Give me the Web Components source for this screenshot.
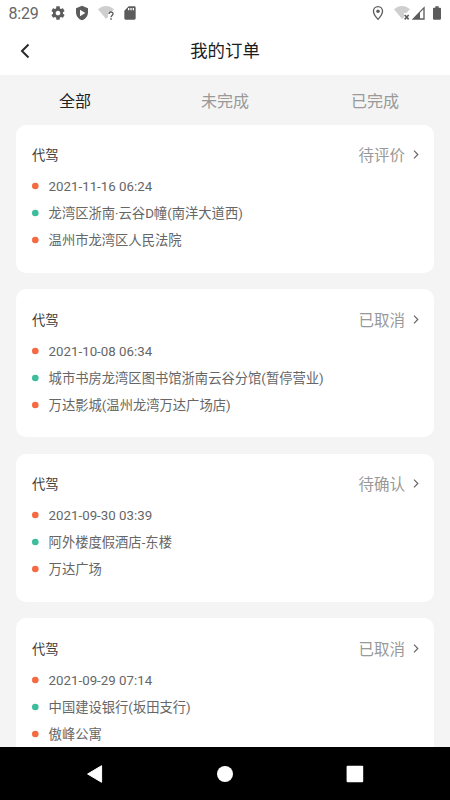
<!DOCTYPE html>
<html lang="zh-CN">
<head>
<meta charset="UTF-8">
<title>我的订单</title>
<style>
  body {
    margin: 0;
    width: 450px;
    height: 800px;
    overflow: hidden;
    background: #f4f4f4;
    font-family: Roboto, "Noto Sans CJK SC", sans-serif;
  }
</style>
</head>
<body>
<order-app>
  <status-bar slot="top" time="8:29"></status-bar>
  <nav-header slot="top">我的订单</nav-header>
  <tab-bar slot="top">
    <tab-item active>全部</tab-item>
    <tab-item>未完成</tab-item>
    <tab-item>已完成</tab-item>
  </tab-bar>
  <order-card status="待评价">
    代驾
    <order-line slot="lines">2021-11-16 06:24</order-line>
    <order-line slot="lines" kind="start">龙湾区浙南·云谷D幢(南洋大道西)</order-line>
    <order-line slot="lines">温州市龙湾区人民法院</order-line>
  </order-card>
  <order-card status="已取消">
    代驾
    <order-line slot="lines">2021-10-08 06:34</order-line>
    <order-line slot="lines" kind="start">城市书房龙湾区图书馆浙南云谷分馆(暂停营业)</order-line>
    <order-line slot="lines">万达影城(温州龙湾万达广场店)</order-line>
  </order-card>
  <order-card status="待确认">
    代驾
    <order-line slot="lines">2021-09-30 03:39</order-line>
    <order-line slot="lines" kind="start">阿外楼度假酒店-东楼</order-line>
    <order-line slot="lines">万达广场</order-line>
  </order-card>
  <order-card status="已取消">
    代驾
    <order-line slot="lines">2021-09-29 07:14</order-line>
    <order-line slot="lines" kind="start">中国建设银行(坂田支行)</order-line>
    <order-line slot="lines">傲峰公寓</order-line>
  </order-card>
  <system-nav slot="bottom"></system-nav>
</order-app>

<script>
class OrderApp extends HTMLElement {
  constructor() {
    super();
    this.attachShadow({ mode: 'open' }).innerHTML = `
      <style>
        :host {
          display: flex;
          flex-direction: column;
          height: 800px;
        }
        main {
          flex: 1;
          min-height: 0;
          overflow: hidden;
          display: flex;
          flex-direction: column;
          gap: 16.5px;
          padding: 0 16px;
        }
      </style>
      <slot name="top"></slot>
      <main><slot></slot></main>
      <slot name="bottom"></slot>
    `;
  }
}

class StatusBar extends HTMLElement {
  connectedCallback() {
    this.attachShadow({ mode: 'open' }).innerHTML = `
      <style>
        :host {
          display: flex;
          align-items: center;
          justify-content: space-between;
          box-sizing: border-box;
          height: 27px;
          padding: 0 5.5px 1px 8.5px;
          background: #fff;
          color: #666;
        }
        .group {
          display: flex;
          align-items: center;
          gap: 8px;
        }
        .right { gap: 0; }
        .time {
          width: 33.5px;
          font-size: 16px;
          line-height: 26px;
          padding-top: 1px;
          letter-spacing: -0.2px;
        }
        svg {
          display: block;
          width: 16px;
          height: 16px;
          fill: #5c5c5c;
        }
        .pin { margin-right: 8.5px; }
        .battery { margin-left: 2.5px; }
      </style>
      <div class="group">
        <span class="time">${this.getAttribute('time')}</span>
        <svg viewBox="0 0 24 24"><path d="M19.43 12.98c.04-.32.07-.64.07-.98s-.03-.66-.07-.98l2.11-1.65c.19-.15.24-.42.12-.64l-2-3.46c-.12-.22-.39-.3-.61-.22l-2.49 1c-.52-.4-1.08-.73-1.69-.98l-.38-2.65C14.46 2.18 14.25 2 14 2h-4c-.25 0-.46.18-.49.42l-.38 2.65c-.61.25-1.17.59-1.69.98l-2.49-1c-.23-.09-.49 0-.61.22l-2 3.46c-.13.22-.07.49.12.64l2.11 1.65c-.04.32-.07.65-.07.98s.03.66.07.98l-2.11 1.65c-.19.15-.24.42-.12.64l2 3.46c.12.22.39.3.61.22l2.49-1c.52.4 1.08.73 1.69.98l.38 2.65c.03.24.24.42.49.42h4c.25 0 .46-.18.49-.42l.38-2.65c.61-.25 1.17-.59 1.69-.98l2.49 1c.23.09.49 0 .61-.22l2-3.46c.12-.22.07-.49-.12-.64l-2.11-1.65zM12 15.5c-1.93 0-3.5-1.57-3.5-3.5s1.57-3.5 3.5-3.5 3.5 1.57 3.5 3.5-1.57 3.5-3.5 3.5z"/></svg>
        <svg viewBox="0 0 24 24"><path fill-rule="evenodd" d="M12 1 3 5v6c0 5.55 3.84 10.74 9 12 5.16-1.26 9-6.45 9-12V5zM9 7v10l8-5z"/></svg>
        <svg viewBox="0 0 24 24">
          <path fill="#cfcfcf" d="M0 6.500C7-.2 17-.2 24 6.500L20.500 10H15v8l-3 3z"/>
          <path fill="none" stroke="#5c5c5c" stroke-width="2" d="M16.500 13.500c0-4 6-4 6-.3 0 2.600-3 2.500-3 5.300"/>
          <path d="M18.400 20h2.300v2.300h-2.300z"/>
        </svg>
        <svg viewBox="0 0 24 24"><path fill-rule="evenodd" d="M18.500 2H10L3.500 8.500V20a2 2 0 0 0 2 2h13a2 2 0 0 0 2-2V4a2 2 0 0 0-2-2zM9 4.500V8h2V4.500zm3.500 0V8h2V4.500zm3.500 0V8h2V4.500z"/></svg>
      </div>
      <div class="group right">
        <svg class="pin" viewBox="0 0 24 24">
          <path fill="none" stroke="#5c5c5c" stroke-width="2" d="M12 2.500c-3.900 0-6.800 3-6.800 6.700 0 4.800 6.800 12.300 6.800 12.300s6.800-7.500 6.800-12.300c0-3.700-2.900-6.700-6.800-6.700z"/>
          <circle cx="12" cy="9.300" r="2.600"/>
        </svg>
        <svg viewBox="0 0 24 24">
          <path fill="#cfcfcf" d="M0 6.500C7-.2 17-.2 24 6.500L18.500 12H15v6l-3 3z"/>
          <path fill="none" stroke="#5c5c5c" stroke-width="2.400" d="m16 15 6 6.500m0-6.500-6 6.500"/>
        </svg>
        <svg viewBox="0 0 24 24">
          <path fill-rule="evenodd" d="M2.500 22H22V2zM15 11.500l5-5V20h-5z"/>
        </svg>
        <svg class="battery" viewBox="0 0 24 24"><path d="M16.700 4H14.500V2h-5v2H7.300C6.600 4 6 4.600 6 5.300v15.400c0 .7.600 1.300 1.300 1.300h9.400c.7 0 1.300-.6 1.300-1.300V5.300c0-.7-.6-1.300-1.300-1.300z"/></svg>
      </div>
    `;
  }
}

class NavHeader extends HTMLElement {
  constructor() {
    super();
    this.attachShadow({ mode: 'open' }).innerHTML = `
      <style>
        :host {
          display: grid;
          grid-template-columns: 50px 1fr 50px;
          align-items: center;
          height: 48.4px;
          background: #fff;
          color: #1c1c1c;
        }
        svg {
          display: block;
          width: 10px;
          height: 16px;
          margin-left: 20px;
        }
        h1 {
          margin: 0;
          font-size: 17.4px;
          font-weight: 400;
          line-height: 24px;
          text-align: center;
        }
      </style>
      <svg viewBox="0 0 10 16"><path d="M8.500 1.500 2 8l6.500 6.500" fill="none" stroke="#2a2a2a" stroke-width="2"/></svg>
      <h1><slot></slot></h1>
    `;
  }
}

class TabBar extends HTMLElement {
  constructor() {
    super();
    this.attachShadow({ mode: 'open' }).innerHTML = `
      <style>
        :host {
          display: grid;
          grid-template-columns: repeat(3, 1fr);
          height: 49.6px;
        }
      </style>
      <slot></slot>
    `;
  }
}

class TabItem extends HTMLElement {
  constructor() {
    super();
    this.attachShadow({ mode: 'open' }).innerHTML = `
      <style>
        :host {
          display: block;
          font-size: 16px;
          line-height: 53px;
          text-align: center;
          color: #999;
        }
        :host([active]) { color: #222; }
      </style>
      <slot></slot>
    `;
  }
}

class OrderCard extends HTMLElement {
  connectedCallback() {
    this.attachShadow({ mode: 'open' }).innerHTML = `
      <style>
        :host {
          display: block;
          box-sizing: border-box;
          flex: none;
          height: 148px;
          padding: 15px 15px 0 16px;
          border-radius: 10px;
          background: #fff;
        }
        header {
          display: flex;
          align-items: center;
          height: 30px;
          font-size: 13.3px;
          line-height: 30px;
          color: #3c3c3c;
        }
        header span { padding-top: 2.6px; }
        .status {
          margin-left: auto;
          font-size: 15.5px;
          color: #999;
        }
        svg {
          width: 6px;
          height: 9px;
          margin-left: 8px;
        }
        .lines { padding-top: 3.4px; }
      </style>
      <header>
        <span><slot></slot></span>
        <span class="status">${this.getAttribute('status')}</span>
        <svg viewBox="0 0 6 9"><path d="m1 .7 3.800 3.800L1 8.300" fill="none" stroke="#666" stroke-width="1.200"/></svg>
      </header>
      <div class="lines"><slot name="lines"></slot></div>
    `;
  }
}

class OrderLine extends HTMLElement {
  constructor() {
    super();
    this.attachShadow({ mode: 'open' }).innerHTML = `
      <style>
        :host {
          --dot: #f56a42;
          display: flex;
          align-items: center;
          height: 27px;
          font-size: 13.3px;
          line-height: 27px;
          color: #666;
          white-space: nowrap;
        }
        :host([kind="start"]) { --dot: #3dbd9b; }
        svg {
          width: 7px;
          height: 8px;
          margin: -1px 9.6px 0 0;
          fill: var(--dot);
        }
      </style>
      <svg viewBox="0 0 7 8"><circle cx="3.300" cy="4" r="3.300"/></svg>
      <span><slot></slot></span>
    `;
  }
}

class SystemNav extends HTMLElement {
  constructor() {
    super();
    this.attachShadow({ mode: 'open' }).innerHTML = `
      <style>
        :host {
          display: flex;
          justify-content: center;
          align-items: center;
          gap: 111.5px;
          height: 52.6px;
          background: #000;
        }
        svg {
          width: 18px;
          height: 20px;
          fill: #fff;
        }
      </style>
      <svg viewBox="0 0 18 20"><path d="M14.600 1.700v16.600L.6 10z" stroke="#fff" stroke-linejoin="round"/></svg>
      <svg viewBox="0 0 18 20"><circle cx="9" cy="10" r="8"/></svg>
      <svg viewBox="0 0 18 20"><rect x=".6" y="1.700" width="16.600" height="16.600" rx="1"/></svg>
    `;
  }
}

customElements.define('order-app', OrderApp);
customElements.define('status-bar', StatusBar);
customElements.define('nav-header', NavHeader);
customElements.define('tab-bar', TabBar);
customElements.define('tab-item', TabItem);
customElements.define('order-card', OrderCard);
customElements.define('order-line', OrderLine);
customElements.define('system-nav', SystemNav);
</script>
</body>
</html>
